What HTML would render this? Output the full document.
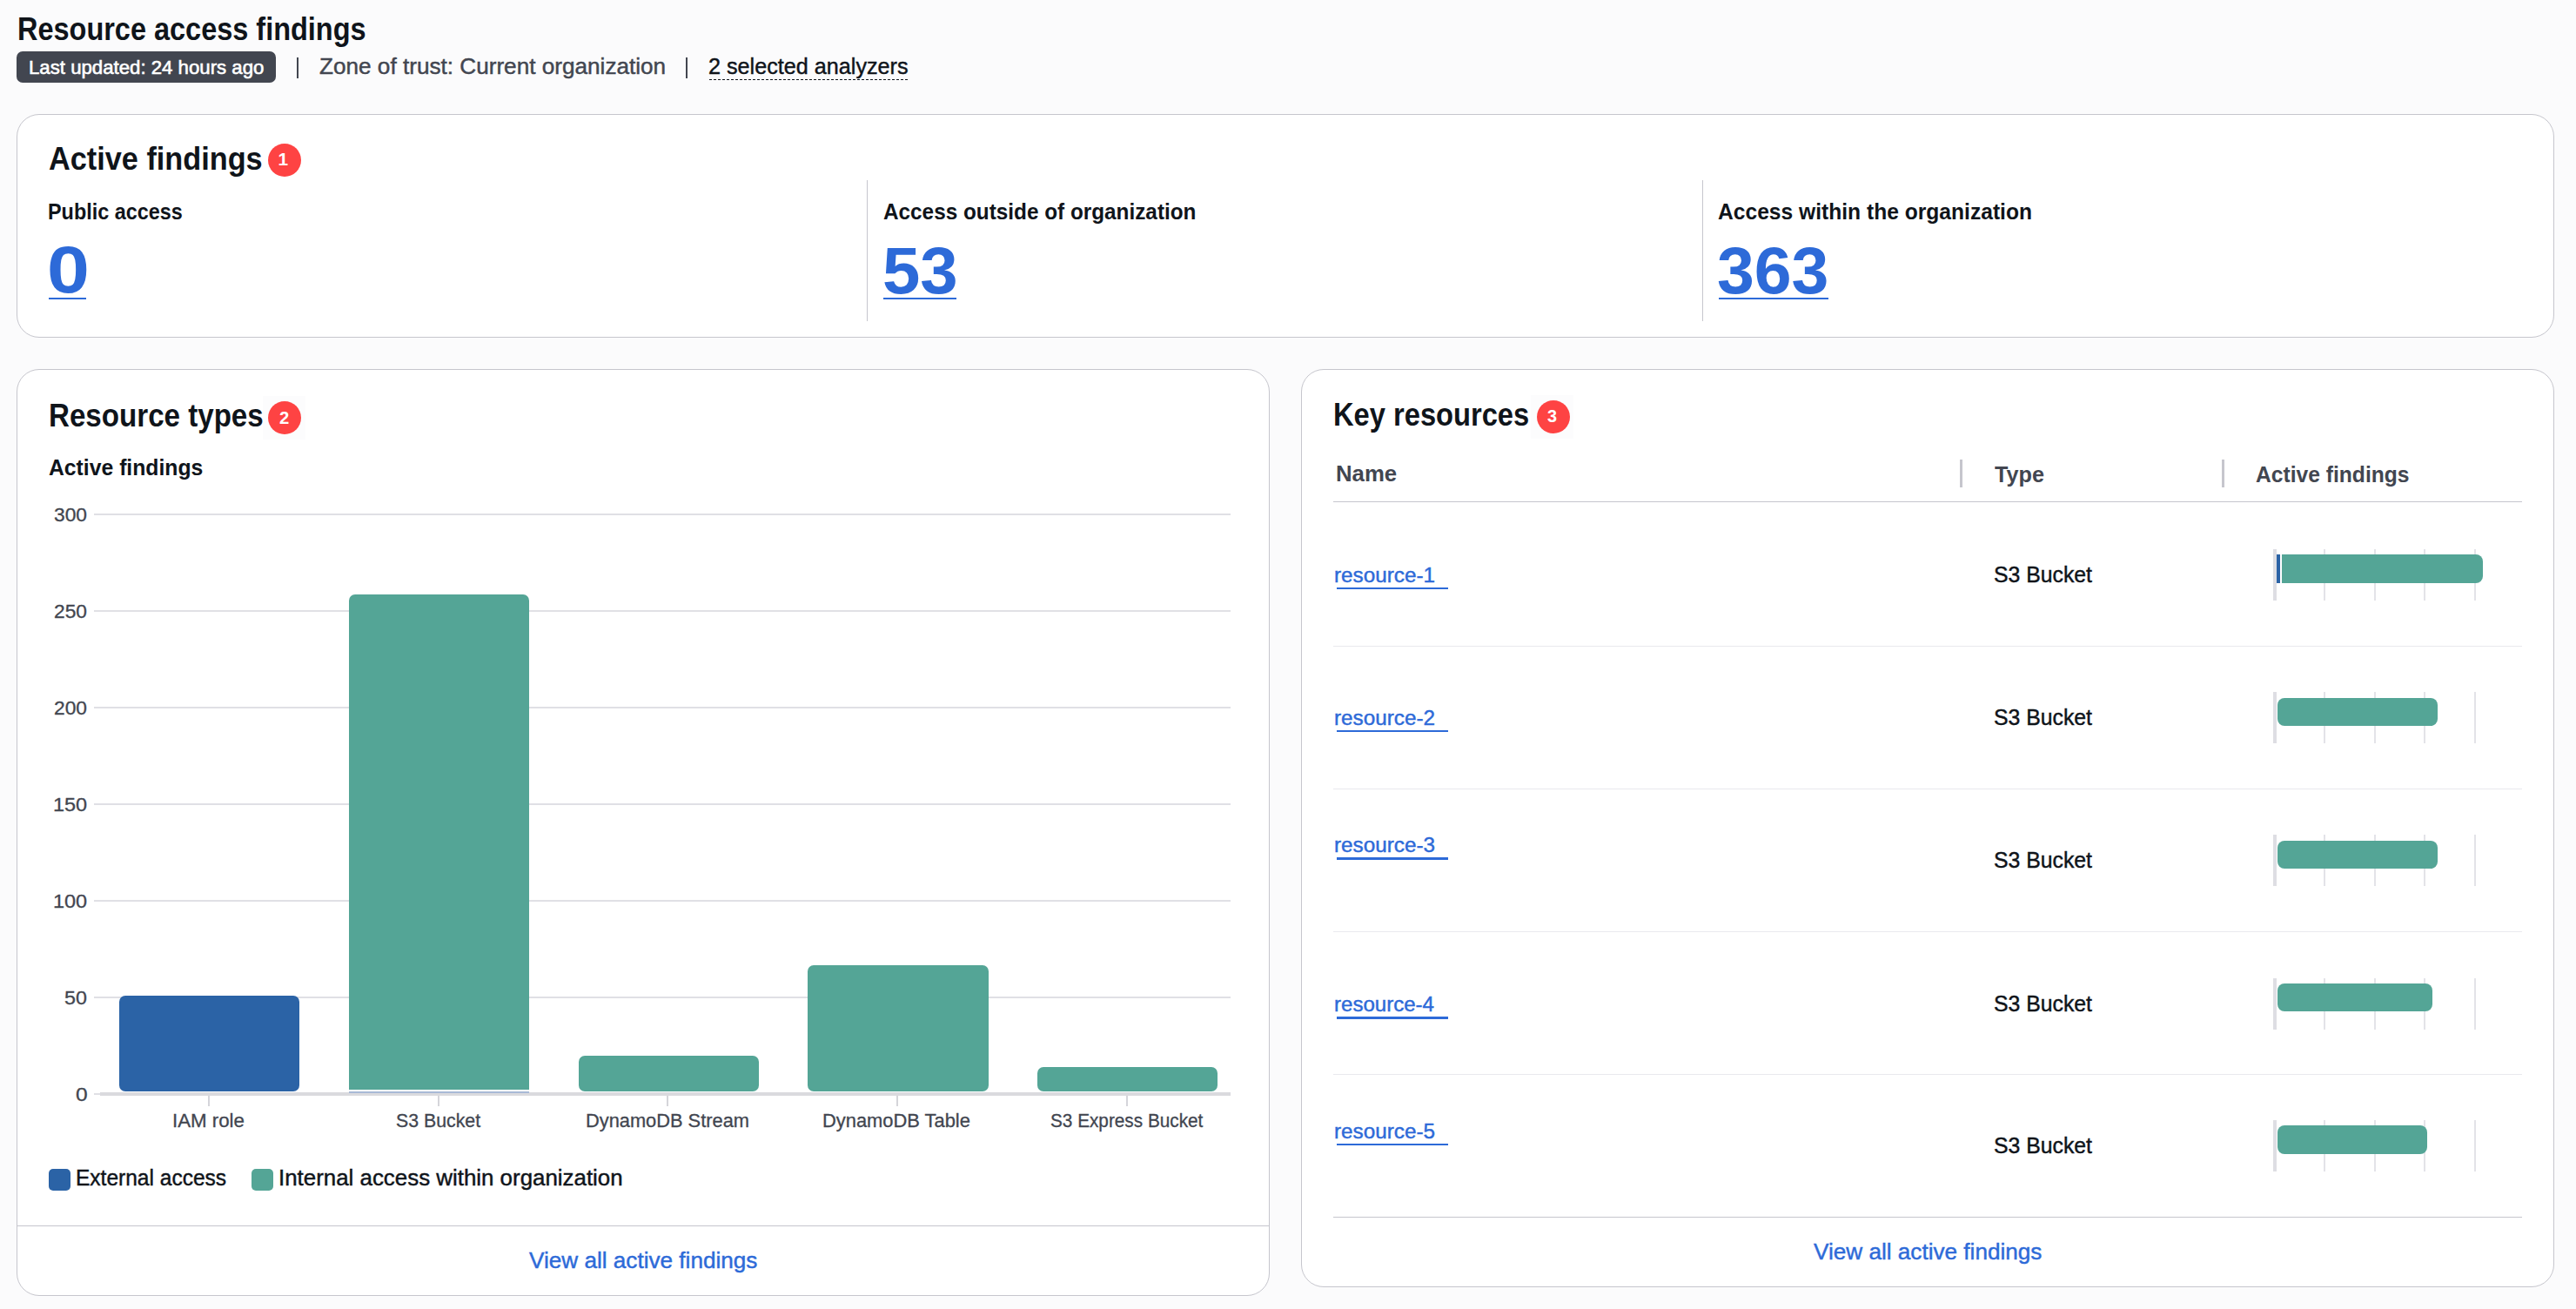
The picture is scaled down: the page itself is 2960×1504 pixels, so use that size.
<!DOCTYPE html><html><head><meta charset="utf-8"><style>
html,body{margin:0;padding:0;width:2960px;height:1504px;overflow:hidden;background:#fbfbfc;font-family:"Liberation Sans",sans-serif}
.t{position:absolute;white-space:pre;line-height:1;transform-origin:0 0}
.r{position:absolute}
.card{position:absolute;background:#fff;border:1px solid #c6c6cd;box-sizing:border-box;border-radius:26px}
</style></head><body>
<div class="card" style="left:19px;top:131px;width:2916px;height:257px"></div>
<div class="card" style="left:19px;top:424px;width:1440px;height:1065px"></div>
<div class="card" style="left:1495px;top:424px;width:1440px;height:1055px"></div>
<div class="r" style="left:19.00px;top:59.00px;width:298.00px;height:36.00px;background:#424650;border-radius:7px"></div>
<div class="r" style="left:341.00px;top:65.80px;width:2.20px;height:24.00px;background:#424650;"></div>
<div class="r" style="left:788.00px;top:65.80px;width:2.20px;height:24.00px;background:#424650;"></div>
<div class="r" style="left:814.50px;top:90.60px;width:228.50px;height:1.20px;background:transparent;background-image:repeating-linear-gradient(90deg,#0f141a 0 3px,transparent 3px 5px)"></div>
<div class="r" style="left:996.00px;top:207.00px;width:1.00px;height:162.00px;background:#c6c6cd;"></div>
<div class="r" style="left:1956.00px;top:207.00px;width:1.00px;height:162.00px;background:#c6c6cd;"></div>
<div class="r" style="left:56.20px;top:341.60px;width:42.40px;height:2.80px;background:#2d6ad8;"></div>
<div class="r" style="left:1015.20px;top:341.60px;width:84.00px;height:2.80px;background:#2d6ad8;"></div>
<div class="r" style="left:1975.20px;top:341.60px;width:125.80px;height:2.80px;background:#2d6ad8;"></div>
<div class="r" style="left:301.60px;top:455.00px;width:49.00px;height:49.50px;background:#fcfcfd;"></div>
<div class="r" style="left:1759.00px;top:454.00px;width:49.00px;height:49.50px;background:#fcfcfd;"></div>
<div class="r" style="left:308.00px;top:164.90px;width:38px;height:38px;border-radius:50%;background:#fe4343"></div>
<div class="r" style="left:308.00px;top:460.70px;width:38px;height:38px;border-radius:50%;background:#fe4343"></div>
<div class="r" style="left:1766.00px;top:459.80px;width:38px;height:38px;border-radius:50%;background:#fe4343"></div>
<div class="r" style="left:107.80px;top:589.60px;width:1306.70px;height:2.00px;background:#e0e0e5;"></div>
<div class="r" style="left:107.80px;top:700.65px;width:1306.70px;height:2.00px;background:#e0e0e5;"></div>
<div class="r" style="left:107.80px;top:811.70px;width:1306.70px;height:2.00px;background:#e0e0e5;"></div>
<div class="r" style="left:107.80px;top:922.75px;width:1306.70px;height:2.00px;background:#e0e0e5;"></div>
<div class="r" style="left:107.80px;top:1033.80px;width:1306.70px;height:2.00px;background:#e0e0e5;"></div>
<div class="r" style="left:107.80px;top:1144.85px;width:1306.70px;height:2.00px;background:#e0e0e5;"></div>
<div class="r" style="left:107.80px;top:1255.90px;width:6.80px;height:2.00px;background:#e0e0e5;"></div>
<div class="r" style="left:114.60px;top:1255.20px;width:1299.90px;height:3.70px;background:#dadade;"></div>
<div class="r" style="left:137.00px;top:1144.00px;width:207.20px;height:110.00px;background:#2b63a6;border-radius:7px"></div>
<div class="r" style="left:401.00px;top:682.80px;width:207.20px;height:569.20px;background:#54a596;border-radius:7px 7px 0 0"></div>
<div class="r" style="left:401.00px;top:1253.60px;width:207.20px;height:2.00px;background:#a9bad6;"></div>
<div class="r" style="left:664.80px;top:1213.00px;width:207.20px;height:40.80px;background:#54a596;border-radius:7px"></div>
<div class="r" style="left:928.40px;top:1108.60px;width:207.20px;height:145.20px;background:#54a596;border-radius:7px"></div>
<div class="r" style="left:1192.30px;top:1226.40px;width:207.20px;height:27.40px;background:#54a596;border-radius:7px"></div>
<div class="r" style="left:238.80px;top:1258.90px;width:2.00px;height:12.00px;background:#d5d5da;"></div>
<div class="r" style="left:502.80px;top:1258.90px;width:2.00px;height:12.00px;background:#d5d5da;"></div>
<div class="r" style="left:766.30px;top:1258.90px;width:2.00px;height:12.00px;background:#d5d5da;"></div>
<div class="r" style="left:1030.20px;top:1258.90px;width:2.00px;height:12.00px;background:#d5d5da;"></div>
<div class="r" style="left:1294.10px;top:1258.90px;width:2.00px;height:12.00px;background:#d5d5da;"></div>
<div class="r" style="left:56.10px;top:1343.00px;width:24.80px;height:24.70px;background:#2b63a6;border-radius:5px"></div>
<div class="r" style="left:288.90px;top:1342.90px;width:25.00px;height:25.00px;background:#54a596;border-radius:5px"></div>
<div class="r" style="left:20.00px;top:1408.00px;width:1438.00px;height:1.00px;background:#c6c6cd;"></div>
<div class="r" style="left:2252.20px;top:528.00px;width:2.60px;height:32.00px;background:#c6c6cd;"></div>
<div class="r" style="left:2553.20px;top:528.00px;width:2.60px;height:32.00px;background:#c6c6cd;"></div>
<div class="r" style="left:1532.00px;top:576.00px;width:1366.00px;height:1.00px;background:#c6c6cd;"></div>
<div class="r" style="left:1532.00px;top:742.00px;width:1366.00px;height:1.00px;background:#e9e9ee;"></div>
<div class="r" style="left:1532.00px;top:906.00px;width:1366.00px;height:1.00px;background:#e9e9ee;"></div>
<div class="r" style="left:1532.00px;top:1070.00px;width:1366.00px;height:1.00px;background:#e9e9ee;"></div>
<div class="r" style="left:1532.00px;top:1234.00px;width:1366.00px;height:1.00px;background:#e9e9ee;"></div>
<div class="r" style="left:1532.00px;top:1398.00px;width:1366.00px;height:1.00px;background:#c6c6cd;"></div>
<div class="r" style="left:1535.50px;top:675.00px;width:128.00px;height:2.20px;background:#2d6ad8;"></div>
<div class="r" style="left:1535.50px;top:839.00px;width:128.00px;height:2.20px;background:#2d6ad8;"></div>
<div class="r" style="left:1535.50px;top:985.40px;width:128.00px;height:2.20px;background:#2d6ad8;"></div>
<div class="r" style="left:1535.50px;top:1168.40px;width:128.00px;height:2.20px;background:#2d6ad8;"></div>
<div class="r" style="left:1535.50px;top:1313.70px;width:128.00px;height:2.20px;background:#2d6ad8;"></div>
<div class="r" style="left:2612.00px;top:631.10px;width:4.00px;height:59.20px;background:#dedee3;"></div>
<div class="r" style="left:2670.20px;top:631.10px;width:2.00px;height:59.20px;background:#e3e3e8;"></div>
<div class="r" style="left:2727.80px;top:631.10px;width:2.00px;height:59.20px;background:#e3e3e8;"></div>
<div class="r" style="left:2785.30px;top:631.10px;width:2.00px;height:59.20px;background:#e3e3e8;"></div>
<div class="r" style="left:2842.90px;top:631.10px;width:2.00px;height:59.20px;background:#e3e3e8;"></div>
<div class="r" style="left:2615.80px;top:637.40px;width:4.20px;height:32.40px;background:#2b63a6;"></div>
<div class="r" style="left:2622.40px;top:637.40px;width:230.20px;height:32.40px;background:#54a596;border-radius:0 8px 8px 0"></div>
<div class="r" style="left:2612.00px;top:795.20px;width:4.00px;height:59.20px;background:#dedee3;"></div>
<div class="r" style="left:2670.20px;top:795.20px;width:2.00px;height:59.20px;background:#e3e3e8;"></div>
<div class="r" style="left:2727.80px;top:795.20px;width:2.00px;height:59.20px;background:#e3e3e8;"></div>
<div class="r" style="left:2785.30px;top:795.20px;width:2.00px;height:59.20px;background:#e3e3e8;"></div>
<div class="r" style="left:2842.90px;top:795.20px;width:2.00px;height:59.20px;background:#e3e3e8;"></div>
<div class="r" style="left:2616.80px;top:801.50px;width:184.20px;height:32.40px;background:#54a596;border-radius:8px"></div>
<div class="r" style="left:2612.00px;top:959.20px;width:4.00px;height:59.20px;background:#dedee3;"></div>
<div class="r" style="left:2670.20px;top:959.20px;width:2.00px;height:59.20px;background:#e3e3e8;"></div>
<div class="r" style="left:2727.80px;top:959.20px;width:2.00px;height:59.20px;background:#e3e3e8;"></div>
<div class="r" style="left:2785.30px;top:959.20px;width:2.00px;height:59.20px;background:#e3e3e8;"></div>
<div class="r" style="left:2842.90px;top:959.20px;width:2.00px;height:59.20px;background:#e3e3e8;"></div>
<div class="r" style="left:2616.80px;top:965.50px;width:183.90px;height:32.40px;background:#54a596;border-radius:8px"></div>
<div class="r" style="left:2612.00px;top:1123.50px;width:4.00px;height:59.20px;background:#dedee3;"></div>
<div class="r" style="left:2670.20px;top:1123.50px;width:2.00px;height:59.20px;background:#e3e3e8;"></div>
<div class="r" style="left:2727.80px;top:1123.50px;width:2.00px;height:59.20px;background:#e3e3e8;"></div>
<div class="r" style="left:2785.30px;top:1123.50px;width:2.00px;height:59.20px;background:#e3e3e8;"></div>
<div class="r" style="left:2842.90px;top:1123.50px;width:2.00px;height:59.20px;background:#e3e3e8;"></div>
<div class="r" style="left:2616.80px;top:1129.80px;width:178.20px;height:32.40px;background:#54a596;border-radius:8px"></div>
<div class="r" style="left:2612.00px;top:1287.00px;width:4.00px;height:59.20px;background:#dedee3;"></div>
<div class="r" style="left:2670.20px;top:1287.00px;width:2.00px;height:59.20px;background:#e3e3e8;"></div>
<div class="r" style="left:2727.80px;top:1287.00px;width:2.00px;height:59.20px;background:#e3e3e8;"></div>
<div class="r" style="left:2785.30px;top:1287.00px;width:2.00px;height:59.20px;background:#e3e3e8;"></div>
<div class="r" style="left:2842.90px;top:1287.00px;width:2.00px;height:59.20px;background:#e3e3e8;"></div>
<div class="r" style="left:2616.80px;top:1293.30px;width:172.40px;height:32.40px;background:#54a596;border-radius:8px"></div>
<div class="t" style="left:20.11px;top:15.90px;font-size:36.23px;transform:scaleX(0.8964);font-weight:700;color:#0f141a;">Resource access findings</div>
<div class="t" style="left:32.80px;top:65.56px;font-size:22.75px;transform:scaleX(0.9761);-webkit-text-stroke:0.3px #ffffff;color:#ffffff;-webkit-text-stroke:0.6px #fff;">Last updated: 24 hours ago</div>
<div class="t" style="left:366.68px;top:63.50px;font-size:25.65px;transform:scaleX(1.0196);-webkit-text-stroke:0.45px #424650;color:#424650;">Zone of trust: Current organization</div>
<div class="t" style="left:813.76px;top:63.13px;font-size:26.67px;transform:scaleX(0.9448);-webkit-text-stroke:0.45px #0f141a;color:#0f141a;">2 selected analyzers</div>
<div class="t" style="left:55.78px;top:163.64px;font-size:37.25px;transform:scaleX(0.9200);font-weight:700;color:#0f141a;">Active findings</div>
<div class="t" style="left:54.89px;top:231.07px;font-size:25.80px;transform:scaleX(0.9065);font-weight:700;color:#0f141a;">Public access</div>
<div class="t" style="left:53.84px;top:271.70px;font-size:76.23px;transform:scaleX(1.1528);font-weight:700;color:#2d6ad8;">0</div>
<div class="t" style="left:1014.78px;top:229.56px;font-size:26.52px;transform:scaleX(0.9172);font-weight:700;color:#0f141a;">Access outside of organization</div>
<div class="t" style="left:1013.66px;top:272.50px;font-size:76.23px;transform:scaleX(1.0225);font-weight:700;color:#2d6ad8;">53</div>
<div class="t" style="left:1974.47px;top:229.56px;font-size:26.52px;transform:scaleX(0.9282);font-weight:700;color:#0f141a;">Access within the organization</div>
<div class="t" style="left:1973.38px;top:272.50px;font-size:76.23px;transform:scaleX(1.0098);font-weight:700;color:#2d6ad8;">363</div>
<div class="t" style="left:319.45px;top:173.48px;font-size:20.72px;transform:scaleX(1.0000);font-weight:700;color:#ffffff;">1</div>
<div class="t" style="left:321.00px;top:469.75px;font-size:20.29px;transform:scaleX(1.0000);font-weight:700;color:#ffffff;">2</div>
<div class="t" style="left:1777.95px;top:468.92px;font-size:19.86px;transform:scaleX(1.0000);font-weight:700;color:#ffffff;">3</div>
<div class="t" style="left:55.91px;top:459.06px;font-size:37.10px;transform:scaleX(0.8934);font-weight:700;color:#0f141a;">Resource types</div>
<div class="t" style="left:55.54px;top:524.97px;font-size:25.80px;transform:scaleX(0.9590);font-weight:700;color:#0f141a;">Active findings</div>
<div class="t" style="left:608.30px;top:1434.56px;font-size:26.52px;transform:scaleX(0.9853);-webkit-text-stroke:0.45px #2d6ad8;color:#2d6ad8;">View all active findings</div>
<div class="t" style="left:87.37px;top:1340.94px;font-size:25.36px;transform:scaleX(0.9670);-webkit-text-stroke:0.45px #0f141a;color:#0f141a;">External access</div>
<div class="t" style="left:320.49px;top:1341.07px;font-size:25.80px;transform:scaleX(1.0033);-webkit-text-stroke:0.45px #0f141a;color:#0f141a;">Internal access within organization</div>
<div class="t" style="left:1532.40px;top:458.88px;font-size:36.38px;transform:scaleX(0.8980);font-weight:700;color:#0f141a;">Key resources</div>
<div class="t" style="left:1534.72px;top:531.13px;font-size:26.09px;transform:scaleX(0.9882);font-weight:700;color:#424650;">Name</div>
<div class="t" style="left:2291.50px;top:531.53px;font-size:26.09px;transform:scaleX(0.9655);font-weight:700;color:#424650;">Type</div>
<div class="t" style="left:2592.36px;top:531.53px;font-size:26.09px;transform:scaleX(0.9443);font-weight:700;color:#424650;">Active findings</div>
<div class="t" style="left:2084.20px;top:1425.46px;font-size:26.52px;transform:scaleX(0.9853);-webkit-text-stroke:0.45px #2d6ad8;color:#2d6ad8;">View all active findings</div>
<div class="t" style="left:1532.82px;top:648.98px;font-size:24.49px;transform:scaleX(0.9912);-webkit-text-stroke:0.45px #2d6ad8;color:#2d6ad8;">resource-1</div>
<div class="t" style="left:2290.55px;top:646.83px;font-size:26.09px;transform:scaleX(0.9500);-webkit-text-stroke:0.45px #0f141a;color:#0f141a;">S3 Bucket</div>
<div class="t" style="left:1532.82px;top:812.98px;font-size:24.49px;transform:scaleX(0.9912);-webkit-text-stroke:0.45px #2d6ad8;color:#2d6ad8;">resource-2</div>
<div class="t" style="left:2290.55px;top:811.33px;font-size:26.09px;transform:scaleX(0.9500);-webkit-text-stroke:0.45px #0f141a;color:#0f141a;">S3 Bucket</div>
<div class="t" style="left:1532.82px;top:959.38px;font-size:24.49px;transform:scaleX(0.9912);-webkit-text-stroke:0.45px #2d6ad8;color:#2d6ad8;">resource-3</div>
<div class="t" style="left:2290.55px;top:975.23px;font-size:26.09px;transform:scaleX(0.9500);-webkit-text-stroke:0.45px #0f141a;color:#0f141a;">S3 Bucket</div>
<div class="t" style="left:1532.83px;top:1142.38px;font-size:24.49px;transform:scaleX(0.9826);-webkit-text-stroke:0.45px #2d6ad8;color:#2d6ad8;">resource-4</div>
<div class="t" style="left:2290.55px;top:1139.53px;font-size:26.09px;transform:scaleX(0.9500);-webkit-text-stroke:0.45px #0f141a;color:#0f141a;">S3 Bucket</div>
<div class="t" style="left:1532.82px;top:1287.68px;font-size:24.49px;transform:scaleX(0.9912);-webkit-text-stroke:0.45px #2d6ad8;color:#2d6ad8;">resource-5</div>
<div class="t" style="left:2290.55px;top:1302.63px;font-size:26.09px;transform:scaleX(0.9500);-webkit-text-stroke:0.45px #0f141a;color:#0f141a;">S3 Bucket</div>
<div class="t" style="left:61.92px;top:580.61px;font-size:21.16px;transform:scaleX(1.0765);-webkit-text-stroke:0.3px #424650;color:#424650;">300</div>
<div class="t" style="left:61.92px;top:691.66px;font-size:21.16px;transform:scaleX(1.0765);-webkit-text-stroke:0.3px #424650;color:#424650;">250</div>
<div class="t" style="left:61.92px;top:802.71px;font-size:21.16px;transform:scaleX(1.0765);-webkit-text-stroke:0.3px #424650;color:#424650;">200</div>
<div class="t" style="left:60.78px;top:913.76px;font-size:21.16px;transform:scaleX(1.1091);-webkit-text-stroke:0.3px #424650;color:#424650;">150</div>
<div class="t" style="left:60.78px;top:1024.81px;font-size:21.16px;transform:scaleX(1.1091);-webkit-text-stroke:0.3px #424650;color:#424650;">100</div>
<div class="t" style="left:74.30px;top:1135.86px;font-size:21.16px;transform:scaleX(1.1000);-webkit-text-stroke:0.3px #424650;color:#424650;">50</div>
<div class="t" style="left:86.84px;top:1246.91px;font-size:21.16px;transform:scaleX(1.1600);-webkit-text-stroke:0.3px #424650;color:#424650;">0</div>
<div class="t" style="left:197.69px;top:1277.31px;font-size:21.16px;transform:scaleX(1.0526);-webkit-text-stroke:0.3px #424650;color:#424650;">IAM role</div>
<div class="t" style="left:454.99px;top:1277.31px;font-size:21.16px;transform:scaleX(1.0063);-webkit-text-stroke:0.3px #424650;color:#424650;">S3 Bucket</div>
<div class="t" style="left:672.94px;top:1277.31px;font-size:21.16px;transform:scaleX(1.0313);-webkit-text-stroke:0.3px #424650;color:#424650;">DynamoDB Stream</div>
<div class="t" style="left:945.38px;top:1277.31px;font-size:21.16px;transform:scaleX(1.0340);-webkit-text-stroke:0.3px #424650;color:#424650;">DynamoDB Table</div>
<div class="t" style="left:1206.82px;top:1277.31px;font-size:21.16px;transform:scaleX(0.9809);-webkit-text-stroke:0.3px #424650;color:#424650;">S3 Express Bucket</div>
</body></html>
